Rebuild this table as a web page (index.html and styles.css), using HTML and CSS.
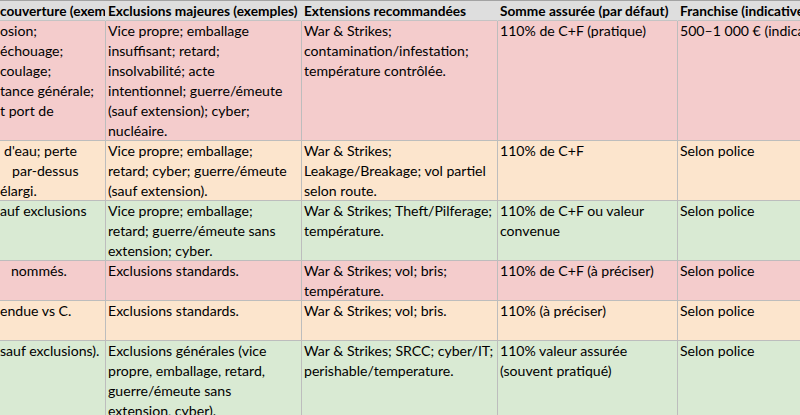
FILE: index.html
```html
<!DOCTYPE html>
<html lang="fr">
<head>
<meta charset="utf-8">
<title>Assurance transport – tableau</title>
<link rel="stylesheet" href="styles.css">
</head>
<body>
<div class="viewport">
  <div class="sheet">
    <div class="cell head first">couverture (exemples)</div>
    <div class="cell head">Exclusions majeures (exemples)</div>
    <div class="cell head">Extensions recommandées</div>
    <div class="cell head">Somme assurée (par défaut)</div>
    <div class="cell head last">Franchise (indicative)</div>

    <div class="cell pink first"><span class="ln">osion;</span><span class="ln">échouage;</span><span class="ln">coulage;</span><span class="ln">tance générale;</span><span class="ln">t port de</span></div>
    <div class="cell pink"><span class="ln">Vice propre; emballage</span><span class="ln">insuffisant; retard;</span><span class="ln">insolvabilité; acte</span><span class="ln">intentionnel; guerre/émeute</span><span class="ln">(sauf extension); cyber;</span><span class="ln">nucléaire.</span></div>
    <div class="cell pink"><span class="ln">War &amp; Strikes;</span><span class="ln">contamination/infestation;</span><span class="ln">température contrôlée.</span></div>
    <div class="cell pink"><span class="ln">110% de C+F (pratique)</span></div>
    <div class="cell pink last"><span class="ln">500–1 000 € (indicative)</span></div>

    <div class="cell peach first"><span class="ln ind5">d'eau; perte</span><span class="ln ind13">par-dessus</span><span class="ln">élargi.</span></div>
    <div class="cell peach"><span class="ln">Vice propre; emballage;</span><span class="ln">retard; cyber; guerre/émeute</span><span class="ln">(sauf extension).</span></div>
    <div class="cell peach"><span class="ln">War &amp; Strikes;</span><span class="ln">Leakage/Breakage; vol partiel</span><span class="ln">selon route.</span></div>
    <div class="cell peach"><span class="ln">110% de C+F</span></div>
    <div class="cell peach last"><span class="ln">Selon police</span></div>

    <div class="cell green first"><span class="ln">auf exclusions</span></div>
    <div class="cell green"><span class="ln">Vice propre; emballage;</span><span class="ln">retard; guerre/émeute sans</span><span class="ln">extension; cyber.</span></div>
    <div class="cell green"><span class="ln">War &amp; Strikes; Theft/Pilferage;</span><span class="ln">température.</span></div>
    <div class="cell green"><span class="ln">110% de C+F ou valeur</span><span class="ln">convenue</span></div>
    <div class="cell green last"><span class="ln">Selon police</span></div>

    <div class="cell pink first"><span class="ln ind12">nommés.</span></div>
    <div class="cell pink"><span class="ln">Exclusions standards.</span></div>
    <div class="cell pink"><span class="ln">War &amp; Strikes; vol; bris;</span><span class="ln">température.</span></div>
    <div class="cell pink"><span class="ln">110% de C+F (à préciser)</span></div>
    <div class="cell pink last"><span class="ln">Selon police</span></div>

    <div class="cell peach first"><span class="ln">endue vs C.</span></div>
    <div class="cell peach"><span class="ln">Exclusions standards.</span></div>
    <div class="cell peach"><span class="ln">War &amp; Strikes; vol; bris.</span></div>
    <div class="cell peach"><span class="ln">110% (à préciser)</span></div>
    <div class="cell peach last"><span class="ln">Selon police</span></div>

    <div class="cell green first"><span class="ln">sauf exclusions).</span></div>
    <div class="cell green"><span class="ln">Exclusions générales (vice</span><span class="ln">propre, emballage, retard,</span><span class="ln">guerre/émeute sans</span><span class="ln">extension, cyber).</span></div>
    <div class="cell green"><span class="ln">War &amp; Strikes; SRCC; cyber/IT;</span><span class="ln">perishable/temperature.</span></div>
    <div class="cell green"><span class="ln">110% valeur assurée</span><span class="ln">(souvent pratiqué)</span></div>
    <div class="cell green last"><span class="ln">Selon police</span></div>
  </div>
</div>
</body>
</html>
```
FILE: styles.css
```css
html, body {
  margin: 0;
  padding: 0;
  background: #ffffff;
}
.viewport {
  width: 800px;
  height: 415px;
  overflow: hidden;
}
.sheet {
  display: grid;
  grid-template-columns: 106px 196px 196px 180px 220px;
  grid-template-rows: 20px 120px 60px 60px 40px 40px 100px;
  border-top: 1px solid #a3a3a3;
  width: max-content;
  font-family: "Lato", "Liberation Sans", sans-serif;
  font-size: 14.1px;
  line-height: 20px;
  color: #000000;
}
.cell {
  box-sizing: border-box;
  border-right: 1px solid #bdbdbd;
  border-bottom: 1px solid #bdbdbd;
  padding: 0 2px;
  overflow: hidden;
  white-space: nowrap;
}
.cell.first {
  padding-left: 0;
}
.head {
  background: #dedede;
  border-right-color: #dedede;
  border-bottom-color: #c4c4c4;
  font-weight: 700;
  font-size: 13.7px;
  line-height: 19px;
}
.ln {
  display: block;
}
.ind5 { padding-left: 4px; }
.ind12 { padding-left: 11px; }
.ind13 { padding-left: 12px; }
.pink { background: #f4cccc; }
.peach { background: #fce5cd; }
.green { background: #d9ead3; }
```
